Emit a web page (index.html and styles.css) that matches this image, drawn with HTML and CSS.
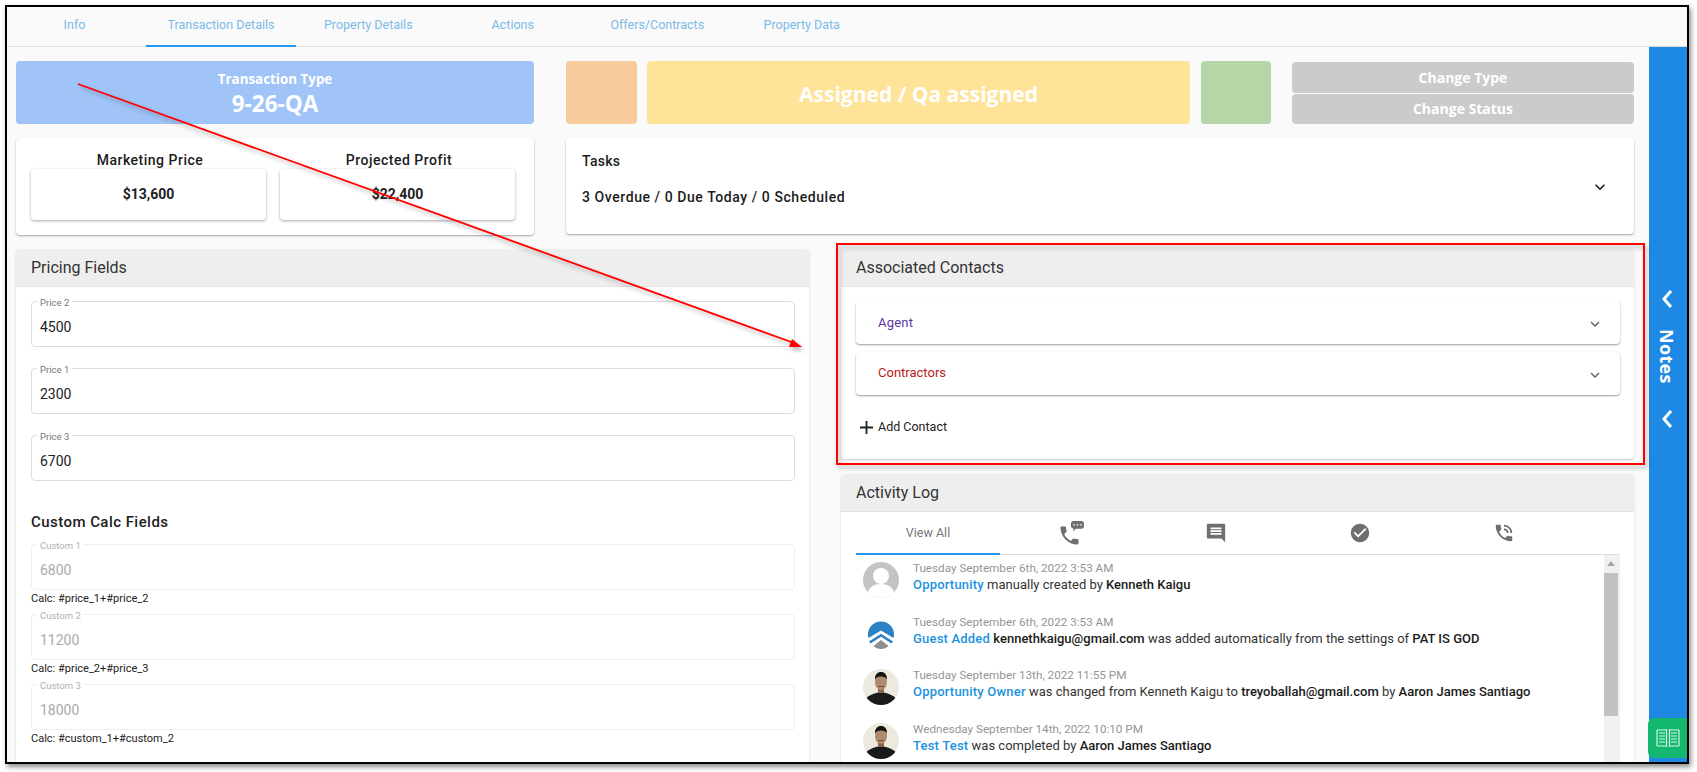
FILE: index.html
```html
<!DOCTYPE html>
<html lang="en">
<head>
<meta charset="utf-8">
<title>Transaction Details</title>
<link rel="stylesheet" href="styles.css">
</head>
<body>
<div class="frame">
  <nav class="tabs">
    <a class="tab tab-info">Info</a>
    <a class="tab tab-active">Transaction Details</a>
    <a class="tab">Property Details</a>
    <a class="tab">Actions</a>
    <a class="tab">Offers/Contracts</a>
    <a class="tab">Property Data</a>
  </nav>
  <div class="content">
    <main class="main">
      <section class="row-top">
        <div class="type-card">
          <div class="type-label">Transaction Type</div>
          <div class="type-value">9-26-QA</div>
        </div>
        <div class="status-row">
          <div class="swatch swatch-orange"></div>
          <div class="status-main">Assigned / Qa assigned</div>
          <div class="swatch swatch-green"></div>
          <div class="change-col">
            <button class="change-btn">Change Type</button>
            <button class="change-btn">Change Status</button>
          </div>
        </div>
      </section>
      <section class="row-summary">
        <div class="summary-card">
          <div class="metric">
            <div class="metric-label">Marketing Price</div>
            <div class="metric-box">$13,600</div>
          </div>
          <div class="metric">
            <div class="metric-label">Projected Profit</div>
            <div class="metric-box">$22,400</div>
          </div>
        </div>
        <div class="tasks-card">
          <div class="tasks-text">
            <div class="tasks-title">Tasks</div>
            <div class="tasks-count">3 Overdue / 0 Due Today / 0 Scheduled</div>
          </div>
          <svg class="chev-tasks" viewBox="0 0 24 24"><path d="M7.41 8.59L12 13.17l4.59-4.58L18 10l-6 6-6-6z"/></svg>
        </div>
      </section>
      <section class="row-panels">
        <div class="panel panel-left">
          <h2 class="panel-head">Pricing Fields</h2>
          <div class="pricing-body">
            <div class="field-stack">
              <div class="field"><span class="field-label">Price 2</span>4500</div>
              <div class="field"><span class="field-label">Price 1</span>2300</div>
              <div class="field"><span class="field-label">Price 3</span>6700</div>
            </div>
            <h3 class="calc-title">Custom Calc Fields</h3>
            <div class="field field-off"><span class="field-label">Custom 1</span>6800</div>
            <div class="calc-note">Calc: #price_1+#price_2</div>
            <div class="field field-off"><span class="field-label">Custom 2</span>11200</div>
            <div class="calc-note">Calc: #price_2+#price_3</div>
            <div class="field field-off"><span class="field-label">Custom 3</span>18000</div>
            <div class="calc-note">Calc: #custom_1+#custom_2</div>
          </div>
        </div>
        <div class="col-right">
          <div class="panel panel-contacts">
            <h2 class="panel-head">Associated Contacts</h2>
            <div class="contacts-body">
              <div class="accordion">
                <span class="acc-agent">Agent</span>
                <svg class="chev-acc" viewBox="0 0 24 24"><path d="M7.41 8.59L12 13.17l4.59-4.58L18 10l-6 6-6-6z"/></svg>
              </div>
              <div class="accordion">
                <span class="acc-contractors">Contractors</span>
                <svg class="chev-acc" viewBox="0 0 24 24"><path d="M7.41 8.59L12 13.17l4.59-4.58L18 10l-6 6-6-6z"/></svg>
              </div>
              <div class="add-contact">
                <svg class="plus" viewBox="0 0 14 14"><path d="M6 0h2v6h6v2H8v6H6V8H0V6h6z"/></svg>
                <span>Add Contact</span>
              </div>
            </div>
          </div>
          <div class="panel panel-log">
            <h2 class="panel-head">Activity Log</h2>
            <div class="log-body">
              <div class="log-tabs">
                <div class="log-tab log-tab-active">View All</div>
                <div class="log-tab">
                  <svg class="log-icon log-icon-wide" viewBox="0 0 24 24"><path transform="translate(-2.500 2.500)" d="M6.620 10.790c1.440 2.830 3.760 5.140 6.590 6.590l2.200-2.200c.27-.27.67-.36 1.020-.24 1.120.37 2.330.57 3.570.57.55 0 1 .45 1 1V20c0 .55-.45 1-1 1-9.390 0-17-7.610-17-17 0-.55.45-1 1-1h3.500c.55 0 1 .45 1 1 0 1.250.2 2.450.57 3.570.11.35.03.74-.25 1.020l-2.200 2.200z"/><path fill-rule="evenodd" d="M13.500 0h8c1.400 0 2.500 1 2.500 2.300v3c0 1.300-1.100 2.400-2.500 2.400h-5.500l-3 2.300.5-2.400C12 7.400 11 6.500 11 5.300v-3C11 1 12.100 0 13.500 0zM14 3.100a.8.8 0 1 0 0 1.600.8.8 0 0 0 0-1.600zm3.500 0a.8.8 0 1 0 0 1.600.8.8 0 0 0 0-1.600zm3.500 0a.8.8 0 1 0 0 1.600.8.8 0 0 0 0-1.600z"/></svg>
                </div>
                <div class="log-tab">
                  <svg class="log-icon" viewBox="0 0 24 24"><path d="M3 2h18c.6 0 1 .4 1 1v19l-4-4H3c-.6 0-1-.4-1-1V3c0-.6.4-1 1-1zm3 4v2h12V6H6zm0 3v2h12V9H6zm0 3v2h12v-2H6z" fill-rule="evenodd"/></svg>
                </div>
                <div class="log-tab">
                  <svg class="log-icon" viewBox="0 0 24 24"><path d="M12 2C6.480 2 2 6.480 2 12s4.480 10 10 10 10-4.480 10-10S17.520 2 12 2zm-2 15l-5-5 1.410-1.410L10 14.170l7.590-7.590L19 8l-9 9z"/></svg>
                </div>
                <div class="log-tab">
                  <svg class="log-icon" viewBox="0 0 24 24"><path d="M20 15.500c-1.250 0-2.450-.2-3.570-.57-.35-.11-.74-.03-1.020.24l-2.200 2.200c-2.830-1.440-5.150-3.750-6.590-6.590l2.200-2.210c.28-.26.36-.65.25-1C8.700 6.450 8.500 5.250 8.500 4c0-.55-.45-1-1-1H4c-.55 0-1 .45-1 1 0 9.390 7.610 17 17 17 .55 0 1-.45 1-1v-3.500c0-.55-.45-1-1-1zM19 12h2c0-4.970-4.030-9-9-9v2c3.870 0 7 3.130 7 7zm-4 0h2c0-2.760-2.240-5-5-5v2c1.660 0 3 1.340 3 3z"/></svg>
                </div>
              </div>
              <div class="log-scroll">
                <div class="log-list">
                  <article class="log-row">
                    <svg class="avatar" viewBox="0 0 36 36"><defs><clipPath id="c1"><circle cx="18" cy="18" r="18"/></clipPath></defs><g clip-path="url(#c1)"><rect width="36" height="36" fill="#c4c4c4"/><circle cx="18" cy="14" r="8" fill="#fff"/><path d="M4 36c0-10 6-14 14-14s14 4 14 14z" fill="#fff"/></g></svg>
                    <div class="log-text">
                      <div class="log-date">Tuesday September 6th, 2022 3:53 AM</div>
                      <div class="log-line"><a class="lk">Opportunity</a> manually created by <b>Kenneth Kaigu</b></div>
                    </div>
                  </article>
                  <article class="log-row">
                    <svg class="avatar logo" viewBox="0 0 28 28"><path d="M1.500 17A13 13 0 1 1 26.500 17L14 9.500z" fill="#2a82c4"/><path d="M2 20.500L14 12.800 26 20.500 24.500 22.500 14 15.800 3.500 22.500z" fill="#2a82c4"/><path d="M6.500 25L14 19l7.500 6c-2 2-4.500 3-7.500 3s-5.500-1-7.500-3z" fill="#8c8f91"/></svg>
                    <div class="log-text">
                      <div class="log-date">Tuesday September 6th, 2022 3:53 AM</div>
                      <div class="log-line"><a class="lk">Guest Added</a> <b>kennethkaigu@gmail.com</b> was added automatically from the settings of <b>PAT IS GOD</b></div>
                    </div>
                  </article>
                  <article class="log-row">
                    <svg class="avatar" viewBox="0 0 36 36"><defs><clipPath id="c2"><circle cx="18" cy="18" r="18"/></clipPath></defs><g clip-path="url(#c2)"><rect width="36" height="36" fill="#ece9df"/><path d="M1 36c0-8 6-11 17-13 11 2 17 5 17 13z" fill="#191a1c"/><rect x="15" y="18" width="6" height="6" fill="#8a6550"/><ellipse cx="18" cy="13" rx="6" ry="8" fill="#b08a6d"/><path d="M12 10.500c-.3-5 2.500-7.500 6-7.500s6.300 2.500 6 7.500c-1-2-3-3-6-3s-5 1-6 3z" fill="#16140f"/><path d="M15 17h6v1h-6z" fill="#6d5040"/></g></svg>
                    <div class="log-text">
                      <div class="log-date">Tuesday September 13th, 2022 11:55 PM</div>
                      <div class="log-line"><a class="lk">Opportunity Owner</a> was changed from Kenneth Kaigu to <b>treyoballah@gmail.com</b> by <b>Aaron James Santiago</b></div>
                    </div>
                  </article>
                  <article class="log-row">
                    <svg class="avatar" viewBox="0 0 36 36"><defs><clipPath id="c3"><circle cx="18" cy="18" r="18"/></clipPath></defs><g clip-path="url(#c3)"><rect width="36" height="36" fill="#ece9df"/><path d="M1 36c0-8 6-11 17-13 11 2 17 5 17 13z" fill="#191a1c"/><rect x="15" y="18" width="6" height="6" fill="#8a6550"/><ellipse cx="18" cy="13" rx="6" ry="8" fill="#b08a6d"/><path d="M12 10.500c-.3-5 2.500-7.500 6-7.500s6.300 2.500 6 7.500c-1-2-3-3-6-3s-5 1-6 3z" fill="#16140f"/><path d="M15 17h6v1h-6z" fill="#6d5040"/></g></svg>
                    <div class="log-text">
                      <div class="log-date">Wednesday September 14th, 2022 10:10 PM</div>
                      <div class="log-line"><a class="lk">Test Test</a> was completed by <b>Aaron James Santiago</b></div>
                    </div>
                  </article>
                </div>
                <div class="scrollbar">
                  <svg class="scroll-up" viewBox="0 0 8 5"><path d="M4 0l4 5H0z"/></svg>
                  <div class="scroll-thumb"></div>
                </div>
              </div>
            </div>
          </div>
        </div>
      </section>
    </main>
    <aside class="notes">
      <svg class="notes-chev" viewBox="0 0 16 24"><path d="M12 4L5 12l7 8" /></svg>
      <div class="notes-label">Notes</div>
      <svg class="notes-chev" viewBox="0 0 16 24"><path d="M12 4L5 12l7 8" /></svg>
      <div class="book-btn">
        <svg class="book-icon" viewBox="0 0 24 20"><path d="M1 2h9.500M1 18h9.500M1 2v16M13.500 2H23M13.500 18H23M23 2v16M10.500 1v18M13.500 1v18M3 5h6M3 8h6M3 11h6M3 14h6M15 5h6M15 8h6M15 11h6M15 14h6"/></svg>
      </div>
    </aside>
  </div>
</div>
<svg class="annotation" viewBox="0 0 1697 772">
  <defs>
    <filter id="soft" x="-5%" y="-5%" width="110%" height="110%"><feDropShadow dx="2" dy="3" stdDeviation="2" flood-color="#000" flood-opacity=".3"/></filter>
  </defs>
  <g filter="url(#soft)">
    <rect class="red-box" x="837" y="244" width="807" height="220"/>
    <path class="red-line" d="M78 84L794 343"/>
    <path class="red-head" d="M802 347L789 347L792 339z"/>
  </g>
</svg>
</body>
</html>
```

FILE: styles.css
```css
* { box-sizing: border-box; }
html, body { margin: 0; padding: 0; background: #fff; }
body {
  position: relative;
  width: 1697px;
  height: 772px;
  overflow: hidden;
  font-family: Roboto, "Liberation Sans", sans-serif;
  color: #222;
}
.frame {
  margin: 5px 0 0 5px;
  width: 1684px;
  height: 759px;
  border: 2px solid #000;
  background: #fafafa;
  box-shadow: 2px 3px 5px rgba(0, 0, 0, .45);
  overflow: hidden;
  display: flex;
  flex-direction: column;
}
.annotation {
  position: absolute;
  left: 0;
  top: 0;
  width: 1697px;
  height: 772px;
  pointer-events: none;
}
.red-box { fill: none; stroke: #f00; stroke-width: 2; }
.red-line { fill: none; stroke: #f00; stroke-width: 1.800; }
.red-head { fill: #f00; }

/* top tabs */
.tabs {
  height: 40px;
  flex: none;
  display: flex;
  border-bottom: 1px solid #ddd;
}
.tab {
  width: 144.500px;
  display: flex;
  align-items: center;
  justify-content: center;
  font-size: 12.500px;
  color: #7bbbe6;
  padding-bottom: 5px;
}
.tab-info { width: 139px; padding-right: 4px; }
.tab-active { width: 150px; border-bottom: 2px solid #2196f3; margin-bottom: -1px; padding-bottom: 4px; }

.content { flex: 1; display: flex; min-height: 0; }
.main {
  width: 1642px;
  flex: none;
  padding: 14px 15px 0 9px;
  overflow: hidden;
}

/* header blocks */
.row-top { display: flex; gap: 32px; height: 63px; margin-bottom: 14px; }
.type-card {
  width: 518px;
  flex: none;
  background: #a0c4f8;
  border-radius: 4px;
  color: #fff;
  text-align: center;
  font-family: "Open Sans", sans-serif;
  font-weight: 700;
  padding-top: 9px;
}
.type-label { font-size: 13.400px; line-height: 18px; }
.type-value { font-size: 22.500px; line-height: 31px; }
.status-row { flex: 1; display: flex; }
.swatch { border-radius: 4px; flex: none; }
.swatch-orange { width: 71px; background: #f8cb9c; margin-right: 10px; }
.swatch-green { width: 70px; background: #b5d6a7; margin-right: 21px; }
.status-main {
  flex: 1;
  margin-right: 11px;
  background: #fee398;
  border-radius: 4px;
  color: #fff;
  display: flex;
  align-items: center;
  justify-content: center;
  font-family: "Open Sans", sans-serif;
  font-weight: 700;
  font-size: 21px;
  padding-top: 2px;
}
.change-col { width: 342px; flex: none; display: flex; flex-direction: column; gap: 1px; padding-top: 1px; }
.change-btn {
  flex: 1;
  border: 0;
  border-radius: 4px;
  background: #cbcbcb;
  color: #fff;
  font-family: "Open Sans", sans-serif;
  font-weight: 700;
  font-size: 14px;
  padding: 0;
}

/* summary */
.row-summary { display: flex; gap: 32px; height: 97px; margin-bottom: 14px; }
.summary-card {
  width: 518px;
  flex: none;
  background: #fff;
  border-radius: 4px;
  box-shadow: 0 1px 2px rgba(0, 0, 0, .35);
  display: flex;
  gap: 14px;
  padding: 14px 19px 0 15px;
}
.metric { width: 235px; }
.metric-label { font-size: 14px; font-weight: 500; line-height: 17px; text-align: center; color: #1c1c1c; letter-spacing: .5px; padding-left: 3px; }
.metric-box {
  height: 51px;
  background: #fff;
  border-radius: 4px;
  box-shadow: 0 1px 3px rgba(0, 0, 0, .35);
  display: flex;
  align-items: center;
  justify-content: center;
  font-size: 14px;
  font-weight: 700;
  padding-bottom: 2px;
  color: #222;
}
.tasks-card {
  flex: 1;
  margin-bottom: 1px;
  background: #fff;
  border-radius: 4px;
  box-shadow: 0 1px 2px rgba(0, 0, 0, .35);
  display: flex;
  justify-content: space-between;
  padding: 14px 24px 0 16px;
}
.tasks-title { font-size: 14px; font-weight: 500; line-height: 18px; letter-spacing: .3px; color: #1c1c1c; }
.tasks-count { font-size: 14px; font-weight: 500; line-height: 18px; margin-top: 18px; letter-spacing: .57px; color: #1c1c1c; }
.chev-tasks { width: 20px; height: 20px; margin-top: 25px; fill: #222; }

/* panels */
.row-panels { display: flex; gap: 32px; align-items: flex-start; }
.panel { background: #fff; border-radius: 4px; box-shadow: 0 1px 2px rgba(0, 0, 0, .2); }
.panel-left { width: 793px; flex: none; height: 540px; }
.col-right { flex: 1; display: flex; flex-direction: column; gap: 15px; }
.panel-head {
  margin: 0;
  height: 38px;
  background: #eee;
  border-bottom: 1px solid #e2e2e2;
  border-radius: 4px 4px 0 0;
  font-size: 16px;
  font-weight: 400;
  line-height: 37px;
  padding-left: 15px;
  color: #333;
}
.pricing-body { padding: 14px 14px 0 15px; }
.field-stack { display: flex; flex-direction: column; gap: 21px; }
.field {
  position: relative;
  height: 46px;
  border: 1px solid #ddd;
  border-radius: 4px;
  font-size: 14px;
  line-height: 51px;
  padding-left: 8px;
  color: #222;
}
.field-label {
  position: absolute;
  left: 5px;
  top: -4px;
  padding: 0 3px;
  background: #fff;
  font-size: 9.500px;
  line-height: 10px;
  color: #777;
}
.field-off { border-color: #eee; color: #aaa; }
.field-off .field-label { color: #b0b0b0; }
.calc-title { margin: 32px 0 13px; font-size: 15px; font-weight: 500; line-height: 18px; color: #1c1c1c; letter-spacing: .45px; }
.calc-note { font-size: 11px; line-height: 14px; margin: 2px 0 8px; color: #222; }

.contacts-body { height: 172px; padding: 14px 14px 0 15px; }
.accordion {
  height: 43px;
  margin-bottom: 8px;
  background: #fff;
  border-radius: 4px;
  box-shadow: 0 1px 2px rgba(0, 0, 0, .4);
  display: flex;
  align-items: center;
  justify-content: space-between;
  padding: 0 16px 0 22px;
  font-size: 13px;
}
.acc-agent { color: #5e35a8; padding-bottom: 1px; letter-spacing: .2px; }
.acc-contractors { color: #b71c1c; padding-bottom: 2px; }
.chev-acc { width: 18px; height: 18px; fill: #666; margin-top: 3px; }
.add-contact { display: flex; align-items: center; gap: 5px; margin-top: 24px; padding-left: 4px; font-size: 12.500px; color: #222; }
.plus { width: 13px; height: 13px; fill: #222; margin-top: 1px; }

.log-body { padding: 0 14px 0 15px; }
.log-tabs { display: flex; height: 43px; border-bottom: 1px solid #ddd; }
.log-tab {
  width: 144px;
  display: flex;
  align-items: center;
  justify-content: center;
  font-size: 12.500px;
  color: #777;
}
.log-tab-active { border-bottom: 2px solid #2196f3; margin-bottom: -1px; }
.log-icon { width: 22px; height: 22px; fill: #6f6f6f; }
.log-icon-wide { width: 24px; height: 24px; }
.log-scroll { display: flex; height: 300px; }
.log-list { flex: 1; padding-top: 5px; }
.log-row { display: flex; height: 53.500px; padding-left: 7px; gap: 14px; }
.avatar { width: 36px; height: 36px; flex: none; margin-top: 2px; }
.logo { width: 28px; height: 28px; margin: 7px 4px 0; }
.log-date { font-size: 11.700px; line-height: 16px; color: #959595; }
.log-line { font-size: 13px; line-height: 17px; color: #333; }
.log-line b { font-weight: 500; color: #1a1a1a; }
.lk { color: #1b93e0; font-weight: 500; letter-spacing: .2px; }
.scrollbar { width: 16px; background: #f1f1f1; position: relative; padding: 6px 2px 0 0; }
.scroll-up { display: block; width: 8px; height: 5px; margin: 0 auto 3px; fill: #a8a8a8; }
.scroll-thumb { height: 143px; background: #c1c1c1; margin-top: 7px; }

/* notes rail */
.notes {
  position: relative;
  flex: 1;
  background: #1e88e5;
  display: flex;
  flex-direction: column;
  align-items: center;
  padding-top: 240px;
  padding-right: 2px;
  color: #fff;
}
.notes-chev { width: 16px; height: 24px; fill: none; stroke: #fff; stroke-width: 3; flex: none; }
.notes-label {
  writing-mode: vertical-rl;
  font-family: "Open Sans", sans-serif;
  font-weight: 700;
  font-size: 18px;
  letter-spacing: .3px;
  line-height: 20px;
  margin: 18px 0 23px;
}
.book-btn {
  position: absolute;
  left: -1px;
  right: 0;
  bottom: 4px;
  height: 40px;
  background: #13b86e;
  border-radius: 6px 0 0 6px;
  display: flex;
  align-items: center;
  justify-content: center;
}
.book-icon { width: 24px; height: 20px; fill: none; stroke: #d8f5e6; stroke-width: 1.200; }
```
